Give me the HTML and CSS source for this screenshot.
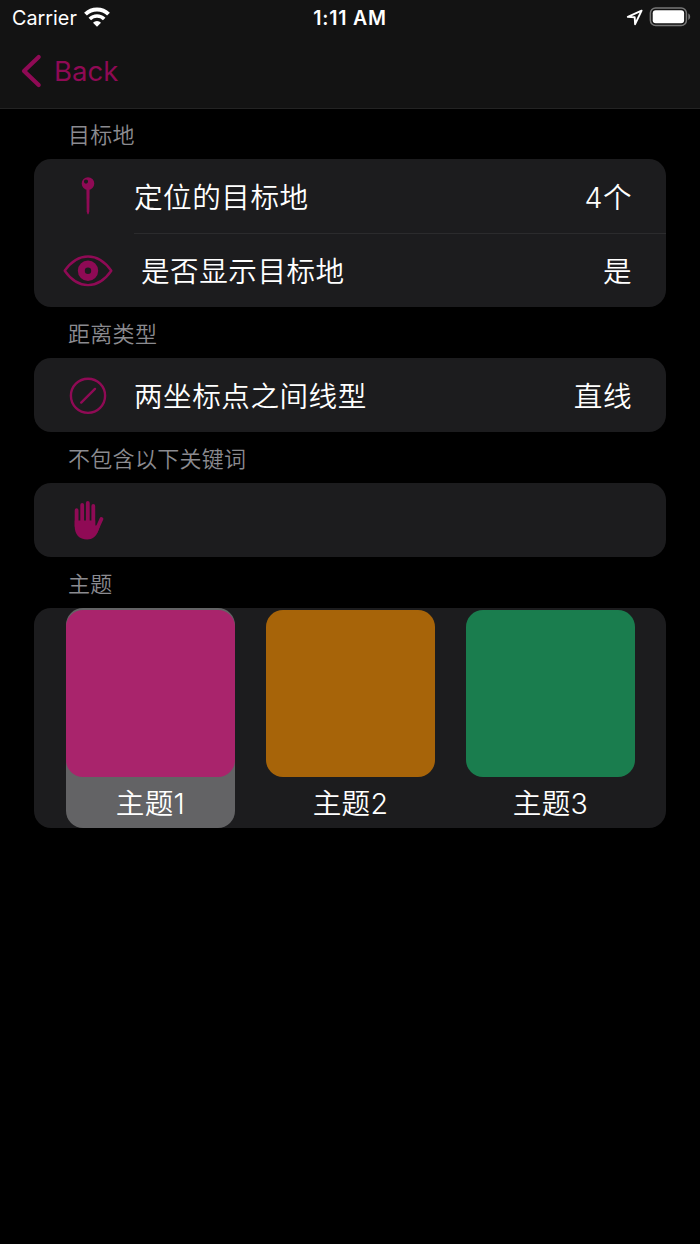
FILE: index.html
```html
<!DOCTYPE html>
<html lang="zh-CN">
<head>
    <meta charset="UTF-8">
    <meta name="viewport" content="width=device-width, initial-scale=1.0">
    <title>主题</title>
    <link rel="stylesheet" href="styles.css">
</head>
<body>
    <header class="header">
        <div class="status-bar">
            <div class="status-left">
                <span>Carrier</span>
                <svg class="wifi" width="26" height="20" viewBox="0 0 26 20" fill="none" stroke="#fff">
                    <path d="M1.500 7.200a16.300 16.300 0 0 1 23 0" stroke-width="4"/>
                    <path d="M5.800 12a10.200 10.200 0 0 1 14.400 0" stroke-width="3.600"/>
                    <path d="M13 19.800l-4-4a5.500 5.500 0 0 1 8 0z" fill="#fff" stroke="none"/>
                </svg>
            </div>
            <div class="status-time">1:11 AM</div>
            <div class="status-right">
                <svg width="18" height="18" viewBox="0 0 18 18" fill="none" stroke="#fff" stroke-width="1.900" stroke-linejoin="round">
                    <path d="M15.600 2.700L1.800 8.900l6.900.4.400 6.900z"/>
                </svg>
                <svg width="42" height="20" viewBox="0 0 42 20">
                    <rect x="1.4" y="0.9" width="36" height="17.6" rx="5.2" fill="none" stroke="#777" stroke-width="1.5"/>
                    <rect x="3.7" y="3.2" width="31.4" height="13" rx="3" fill="#fff"/>
                    <path d="M39.300 6.600c2.500 1 2.500 5.300 0 6.300z" fill="#777"/>
                </svg>
            </div>
        </div>
        <div class="nav">
            <a class="back" href="#">
                <svg width="22" height="34" viewBox="0 0 22 34" fill="none" stroke="currentColor" stroke-width="4.200" stroke-linecap="round" stroke-linejoin="round">
                    <path d="M17.700 3L3 17l14.700 14"/>
                </svg>
                <span>Back</span>
            </a>
        </div>
    </header>

    <main class="container">
        <h2 class="section-title">目标地</h2>
        <div class="card">
            <div class="row">
                <svg class="icon" width="50" height="40" viewBox="0 0 50 40" fill="currentColor">
                    <path fill-rule="evenodd" d="M25 1.200a6.300 6.300 0 1 0 0 12.600 6.300 6.300 0 0 0 0-12.600zM23 3.500a2.100 2.100 0 1 1 0 4.200a2.100 2.100 0 0 1 0-4.200z"/>
                    <path d="M23.400 13h3.200l-.3 22.500q-1.300 6-2.600 0z"/>
                </svg>
                <span class="label">定位的目标地</span>
                <span class="value">4个</span>
            </div>
            <div class="row">
                <svg class="icon" width="50" height="40" viewBox="0 0 50 40" fill="none" stroke="currentColor">
                    <path d="M1.700 20.800C8 11.800 16 6.500 25 6.500S42 11.800 48.300 20.800C42 29.800 34 35.100 25 35.100S8 29.800 1.700 20.800z" stroke-width="2.400" stroke-linejoin="round"/>
                    <circle cx="25" cy="20.800" r="6.700" stroke-width="7"/>
                </svg>
                <span class="label label-indent">是否显示目标地</span>
                <span class="value">是</span>
            </div>
        </div>

        <h2 class="section-title">距离类型</h2>
        <div class="card">
            <div class="row">
                <svg class="icon" width="50" height="40" viewBox="0 0 50 40" fill="none" stroke="currentColor" stroke-width="2.400" stroke-linecap="round">
                    <circle cx="25" cy="20.800" r="17.100"/>
                    <path d="M18.200 27.600L32 13.900"/>
                </svg>
                <span class="label">两坐标点之间线型</span>
                <span class="value">直线</span>
            </div>
        </div>

        <h2 class="section-title">不包含以下关键词</h2>
        <div class="card">
            <div class="row">
                <svg class="icon" width="50" height="40" viewBox="0 0 50 40" fill="currentColor">
                    <g fill="none" stroke="currentColor" stroke-width="3.800" stroke-linecap="round">
                        <path d="M13.600 10.200v16M19.200 5V24M24.800 3V24M30.300 6V26M38.400 18.900L33 31"/>
                    </g>
                    <path d="M11.700 20.500h20.500v5h3.600l1.300-.1-1.700 5C33.200 36.500 29.500 39.400 24.200 39.400c-8 0-12.500-5.100-12.500-13.200z"/>
                </svg>
            </div>
        </div>

        <h2 class="section-title">主题</h2>
        <div class="card themes">
            <div class="theme selected">
                <div class="swatch swatch-pink"></div>
                <span>主题1</span>
            </div>
            <div class="theme">
                <div class="swatch swatch-orange"></div>
                <span>主题2</span>
            </div>
            <div class="theme">
                <div class="swatch swatch-green"></div>
                <span>主题3</span>
            </div>
        </div>
    </main>
</body>
</html>
```
FILE: styles.css
```css
* {
    margin: 0;
    padding: 0;
    box-sizing: border-box;
}

body {
    font-family: Inter, 'Noto Sans CJK SC', sans-serif;
    background: #000;
    min-height: 100vh;
    color: #fff;
}

svg {
    display: block;
    flex-shrink: 0;
}

.header {
    height: 109px;
    background: #131313;
    border-bottom: 1px solid #232323;
}

.status-bar {
    display: grid;
    grid-template-columns: 1fr auto 1fr;
    align-items: center;
    height: 36px;
    padding: 0 9px 0 12px;
    font-size: 19.8px;
    line-height: 36px;
}

.status-left {
    display: flex;
    align-items: center;
    gap: 7px;
}

.wifi {
    margin-top: -3px;
}

.status-time {
    margin-right: 3px;
    font-weight: 600;
    font-size: 19.5px;
    letter-spacing: 0.8px;
}

.status-right {
    display: flex;
    align-items: center;
    justify-content: flex-end;
    gap: 5px;
    margin-top: -2px;
}

.nav {
    display: flex;
    align-items: center;
    height: 70px;
    padding-left: 21px;
}

.back {
    display: flex;
    align-items: center;
    gap: 11px;
    color: #8f0a55;
    font-size: 27.5px;
    line-height: 36px;
    text-decoration: none;
}

.container {
    padding: 0 34px;
}

.section-title {
    height: 51px;
    padding-left: 34px;
    color: #8b8b90;
    font-size: 22px;
    font-weight: 350;
    line-height: 55px;
    letter-spacing: 0.3px;
}

.section-title:first-child {
    height: 50px;
    line-height: 52px;
}

.card {
    background: #1c1c1e;
    border-radius: 17px;
    overflow: hidden;
}

.row {
    position: relative;
    display: flex;
    align-items: center;
    height: 74px;
    padding: 0 34px 0 29px;
    font-size: 28.6px;
    font-weight: 350;
    line-height: 42px;
    letter-spacing: 0.5px;
}

/* divider starts at the label, not at the icon */
.row + .row::before {
    content: '';
    position: absolute;
    top: 0;
    left: 100px;
    right: 0;
    height: 1px;
    background: #2b2b2d;
}

.icon {
    color: #8f0a55;
}

.label,
.value {
    padding-top: 4px;
}

.label {
    flex: 1;
    margin-left: 21px;
}

.label-indent {
    margin-left: 28px;
}

.themes {
    display: flex;
    justify-content: space-between;
    height: 220px;
    padding: 0 31px 0 32px;
}

.theme {
    width: 169px;
    padding-top: 2px;
    border-radius: 17px;
    text-align: center;
    font-size: 28.6px;
    font-weight: 350;
    line-height: 54px;
    letter-spacing: 0.3px;
}

.theme.selected {
    background: #636365;
}

.swatch {
    height: 167px;
    border-radius: 17px;
}

.swatch-pink {
    background: #a9246c;
}

.swatch-orange {
    background: #a76409;
}

.swatch-green {
    background: #1a7d4e;
}
```
